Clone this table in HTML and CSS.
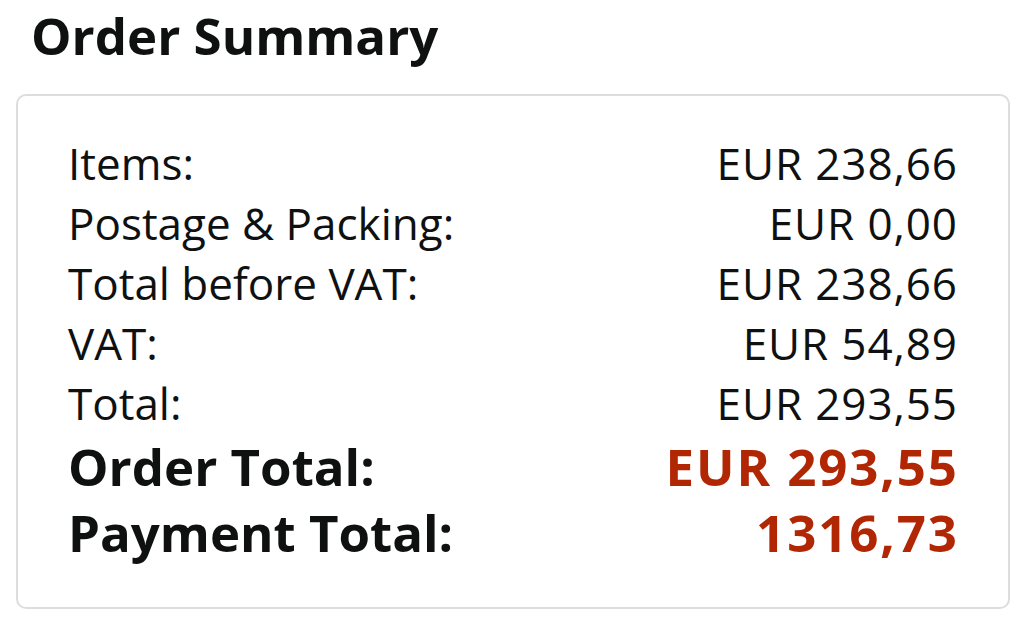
FILE: index.html
```html
<!DOCTYPE html>
<html>
<head>
<meta charset="utf-8">
<link rel="stylesheet" href="styles.css">
</head>
<body>
<h1 class="title">Order Summary</h1>
<div class="card">
  <div class="row"><span>Items:</span><span class="value">EUR 238,66</span></div>
  <div class="row"><span>Postage &amp; Packing:</span><span class="value">EUR 0,00</span></div>
  <div class="row"><span>Total before VAT:</span><span class="value">EUR 238,66</span></div>
  <div class="row"><span>VAT:</span><span class="value">EUR 54,89</span></div>
  <div class="row"><span>Total:</span><span class="value">EUR 293,55</span></div>
  <div class="row big"><span>Order Total:</span><span class="value price">EUR 293,55</span></div>
  <div class="row big"><span>Payment Total:</span><span class="value price">1316,73</span></div>
</div>
</body>
</html>
```
FILE: styles.css
```css
html, body {
  margin: 0;
  background: #fff;
}
body {
  font-family: "Open Sans", "Noto Sans", sans-serif;
  color: #0f1111;
  padding: 0 21px 0 16px;
}
.title {
  margin: 0;
  padding: 4px 0 0 15px;
  font-size: 51px;
  font-weight: 700;
  line-height: 62px;
  height: 90px;
}
.card {
  border: 2px solid #dddddd;
  border-radius: 10px;
  padding: 37px 51px 42px 50px;
}
.row {
  display: flex;
  justify-content: space-between;
  font-size: 44px;
  line-height: 60px;
}
.value {
  letter-spacing: 0.9px;
  margin-right: -0.9px;
}
.row.big {
  font-size: 51px;
  font-weight: 700;
  line-height: 66px;
}
.price {
  color: #b12704;
  letter-spacing: 1.9px;
  margin-right: -1.9px;
}
```
